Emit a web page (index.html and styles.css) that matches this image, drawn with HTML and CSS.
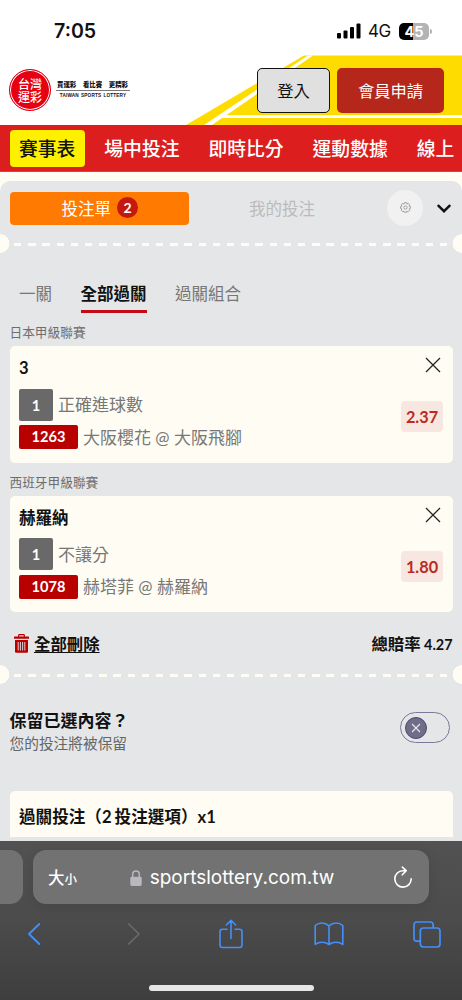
FILE: index.html
```html
<!DOCTYPE html>
<html lang="zh-Hant">
<head>
  <meta charset="UTF-8">
  <meta name="viewport" content="width=device-width, initial-scale=1">
  <title>台灣運彩</title>
  <link rel="stylesheet" href="styles.css">
</head>
<body>
  <div class="status-bar">
    <span class="time">7:05</span>
    <div class="status-right">
      <svg class="signal" width="24" height="16" viewBox="0 0 24 16">
        <rect x="0" y="10" width="4" height="5.5" rx="1"/>
        <rect x="6.5" y="7.5" width="4" height="8" rx="1"/>
        <rect x="13" y="4" width="4" height="11.5" rx="1"/>
        <rect x="19.5" y="0.5" width="4" height="15" rx="1"/>
      </svg>
      <span class="network">4G</span>
      <div class="battery">45</div>
    </div>
  </div>

  <header class="header">
    <svg class="header-bg" width="462" height="70" viewBox="0 0 462 70">
      <path d="M304 0.5H462V70H186z" fill="#ffdc00"/>
      <path d="M308 0.5h5L212 70h-8z" fill="#fff"/>
      <path d="M219 62l6-2h237v3H216z" fill="#fff"/>
    </svg>
    <div class="logo">
      <div class="logo-mark"><span>台灣</span><span>運彩</span></div>
      <div class="logo-text">
        <div class="slogan"><span>買運彩</span><span>看比賽</span><span>更精彩</span></div>
        <div class="logo-en">TAIWAN SPORTS LOTTERY</div>
      </div>
    </div>
    <div class="header-buttons">
      <button class="btn btn-login">登入</button>
      <button class="btn btn-join">會員申請</button>
    </div>
  </header>

  <nav class="nav">
    <a class="nav-item active">賽事表</a>
    <a class="nav-item">場中投注</a>
    <a class="nav-item">即時比分</a>
    <a class="nav-item">運動數據</a>
    <a class="nav-item">線上</a>
  </nav>

  <main class="main">
    <div class="panel">
      <div class="slip-tabs">
        <button class="slip-tab active">投注單 <span class="count">2</span></button>
        <button class="slip-tab">我的投注</button>
        <div class="gear">
          <svg width="11" height="11" viewBox="0 0 24 24" fill="none" stroke="#999" stroke-width="2">
            <circle cx="12" cy="12" r="3.6"/>
            <path d="M9.500 1.500h5l.8 3 3.200-1.200 2.700 3-1.400 2.700 3 1v4l-3 1.200 1.400 3-3 3-3-1.400-1 2.700h-4.400l-1-2.700-3 1.400-3-3 1.400-3-3-1.200v-4l3-1-1.400-2.700 2.700-3 3.200 1.200z"/>
          </svg>
        </div>
        <svg class="chevron" width="14" height="9" viewBox="0 0 14 9" fill="none" stroke="#111" stroke-width="2.4">
          <path d="M0.8 1L7 7.200L13.200 1"/>
        </svg>
      </div>

      <div class="divider"></div>

      <div class="mode-tabs">
        <a class="mode-tab">一關</a>
        <a class="mode-tab active">全部過關</a>
        <a class="mode-tab">過關組合</a>
      </div>

      <div class="league">日本甲級聯賽</div>
      <div class="card">
        <div class="card-info">
          <div class="pick">3</div>
          <div class="row"><span class="tag tag-gray">1</span>正確進球數</div>
          <div class="row"><span class="tag tag-red">1263</span>大阪櫻花 @ 大阪飛腳</div>
        </div>
        <div class="card-side">
          <svg width="16" height="16" viewBox="0 0 16 16" fill="none" stroke="#222" stroke-width="1.3"><path d="M1 1l14 14M15 1L1 15"/></svg>
          <span class="odds">2.37</span>
        </div>
      </div>

      <div class="league">西班牙甲級聯賽</div>
      <div class="card">
        <div class="card-info">
          <div class="pick">赫羅納</div>
          <div class="row"><span class="tag tag-gray">1</span>不讓分</div>
          <div class="row"><span class="tag tag-red">1078</span>赫塔菲 @ 赫羅納</div>
        </div>
        <div class="card-side">
          <svg width="16" height="16" viewBox="0 0 16 16" fill="none" stroke="#222" stroke-width="1.3"><path d="M1 1l14 14M15 1L1 15"/></svg>
          <span class="odds">1.80</span>
        </div>
      </div>

      <div class="summary">
        <a class="delete-all">
          <svg width="15" height="19" viewBox="0 0 15 19">
            <path d="M4.700 3V1.200Q4.700 .6 5.300 .6H9.700Q10.300 .6 10.300 1.200V3" fill="none" stroke="#b90000" stroke-width="1.2"/>
            <rect x="0" y="2.500" width="15" height="2.300" rx=".6" fill="#b90000"/>
            <path d="M1 6h13v11.500q0 1.200-1.200 1.200H2.200Q1 18.700 1 17.500z" fill="#b90000"/>
            <path d="M4.200 8v8.500M6.400 8v8.500M8.600 8v8.500M10.800 8v8.500" stroke="#e5e6e8" stroke-width=".9"/>
          </svg>
          <span>全部刪除</span>
        </a>
        <div class="total">總賠率 <span>4.27</span></div>
      </div>

      <div class="divider"></div>

      <div class="keep">
        <div>
          <div class="keep-title">保留已選內容？</div>
          <div class="keep-sub">您的投注將被保留</div>
        </div>
        <div class="switch">
          <div class="knob">
            <svg width="10" height="10" viewBox="0 0 10 10" fill="none" stroke="#e5e6e8" stroke-width="1.2"><path d="M1 1l8 8M9 1L1 9"/></svg>
          </div>
        </div>
      </div>

      <div class="parlay">過關投注（<span class="num">2</span>投注選項）x1</div>
    </div>
  </main>

  <footer class="browser">
    <div class="address-row">
      <div class="prev-page"></div>
      <div class="address">
        <span class="text-size">大<small>小</small></span>
        <div class="url">
          <svg width="12" height="16" viewBox="0 0 12 16">
            <path d="M2.700 8V4.300a3.300 3.300 0 0 1 6.600 0V8" fill="none" stroke="#b9b8be" stroke-width="1.5"/>
            <rect x="0.300" y="6.700" width="11.400" height="9.200" rx="1.400" fill="#b9b8be"/>
          </svg>
          <span>sportslottery.com.tw</span>
        </div>
        <svg class="reload" width="20" height="22" viewBox="0 0 20 22" fill="none" stroke="#fff" stroke-width="1.6" stroke-linecap="round" stroke-linejoin="round">
          <path d="M12.600 4.700H9.800A8.200 8.200 0 1 0 18.200 12.800M9.300 1.200L13.200 4.700L9.300 8.800"/>
        </svg>
      </div>
    </div>
    <div class="toolbar">
      <div class="tool"><svg width="14" height="22" viewBox="0 0 14 22" fill="none" stroke="#438ffb" stroke-width="1.8" stroke-linecap="round" stroke-linejoin="round"><path d="M12.300 1L2 11l10.300 10"/></svg></div>
      <div class="tool"><svg class="forward" width="14" height="22" viewBox="0 0 14 22" fill="none" stroke="#6b6b6b" stroke-width="1.6" stroke-linecap="round" stroke-linejoin="round"><path d="M1.700 1L12 11L1.700 21"/></svg></div>
      <div class="tool"><svg width="24" height="30" viewBox="0 0 24 30" fill="none" stroke="#438ffb" stroke-width="1.6" stroke-linecap="round" stroke-linejoin="round"><path d="M8 10.300H3.500Q1 10.300 1 12.800V26Q1 28.500 3.500 28.500H20.500Q23 28.500 23 26V12.800Q23 10.300 20.500 10.300H16M12 19.500V1.500M7.300 6L12 1.300L16.700 6"/></svg></div>
      <div class="tool"><svg width="30" height="24" viewBox="0 0 30 24" fill="none" stroke="#438ffb" stroke-width="1.6" stroke-linejoin="round"><path d="M15 3.800Q11.800 1 8 1Q4 1 1.200 3.500V22.500Q4 20.200 8 20.200Q12 20.200 15 22.500Q18 20.200 22 20.200Q26 20.200 28.800 22.500V3.500Q26 1 22 1Q18.200 1 15 3.800V22.500"/></svg></div>
      <div class="tool"><svg width="28" height="27" viewBox="0 0 28 27" fill="none" stroke="#438ffb" stroke-width="1.7"><rect x="7.300" y="7" width="19.700" height="19" rx="3"/><path d="M7.300 20.200H4Q1 20.200 1 17.200V4Q1 1 4 1H17.200Q20.200 1 20.200 4V7"/></svg></div>
    </div>
    <div class="home-bar"></div>
  </footer>
</body>
</html>
```
FILE: styles.css
```css
* {
  box-sizing: border-box;
}

body {
  margin: 0;
  height: 1000px;
  display: flex;
  flex-direction: column;
  overflow: hidden;
  background: #fffdf3;
  font-family: Lato, "Noto Sans CJK TC", sans-serif;
  color: #111;
}

button {
  font-family: inherit;
  border: none;
  padding: 0;
}

svg {
  display: block;
  flex-shrink: 0;
}

/* Status bar */
.status-bar {
  height: 55px;
  flex-shrink: 0;
  display: flex;
  justify-content: space-between;
  padding: 20px 33px 0 54px;
  background: #fff;
  font-family: Inter, sans-serif;
  line-height: 22px;
}

.time {
  font-size: 19.6px;
  font-weight: 600;
}

.status-right {
  display: flex;
  align-items: center;
  height: 22px;
}

.network {
  font-size: 17px;
  letter-spacing: -0.3px;
  margin: 0 8px 0 7px;
}

.battery {
  position: relative;
  width: 30px;
  height: 17px;
  border-radius: 5px;
  background: linear-gradient(to right, #000 46%, #b4b4b4 46%);
  color: #fff;
  font-size: 14.5px;
  font-weight: 700;
  line-height: 17px;
  text-align: center;
}

.battery::after {
  content: "";
  position: absolute;
  left: 31px;
  top: 6px;
  width: 2px;
  height: 5px;
  border-radius: 0 2px 2px 0;
  background: #b4b4b4;
}

/* Header */
.header {
  position: relative;
  height: 70px;
  flex-shrink: 0;
  display: flex;
  justify-content: space-between;
  padding: 13px 18px 0 9px;
  background: #fff;
}

.header-bg {
  position: absolute;
  left: 0;
  top: 0;
}

.logo {
  display: flex;
  height: 45px;
}

.logo-mark {
  width: 42px;
  height: 42px;
  margin-top: 1px;
  border-radius: 50%;
  border: 1.5px solid #e60012;
  box-shadow: inset 0 0 0 1px #fff;
  background: #e60012;
  color: #fff;
  display: flex;
  flex-direction: column;
  align-items: center;
  justify-content: center;
  font-family: "Noto Sans CJK TC", sans-serif;
  font-size: 12px;
  font-weight: 500;
}

.logo-mark span {
  height: 13px;
  line-height: 13px;
}

.logo-text {
  margin: 10px 0 0 5px;
  width: 74px;
}

.slogan {
  display: flex;
  justify-content: space-between;
  padding: 0 2px 0 1px;
  height: 13px;
  border-bottom: 1px solid #777;
  font-size: 6.4px;
  font-weight: 900;
  line-height: 13px;
}

.logo-en {
  font-family: "Liberation Sans", sans-serif;
  font-size: 4.7px;
  font-weight: 700;
  line-height: 10px;
  letter-spacing: 0.15px;
  word-spacing: 0.8px;
  text-align: center;
  white-space: nowrap;
}

.header-buttons {
  position: relative;
  display: flex;
  gap: 7px;
}

.btn {
  height: 45px;
  padding-bottom: 2px;
  border-radius: 5px;
  font-size: 16.3px;
}

.btn-login {
  width: 73px;
  background: #e0e0e0;
  border: 1px solid #111;
  color: #111;
}

.btn-join {
  width: 107px;
  background: #b5261b;
  color: #fff;
}

/* Nav */
.nav {
  height: 47px;
  flex-shrink: 0;
  display: flex;
  gap: 10px;
  padding: 5px 0 0 9.5px;
  background: #dc1e1e;
  border-bottom: 1px solid #e5402f;
  overflow: hidden;
}

.nav-item {
  flex-shrink: 0;
  height: 37px;
  padding: 0 9.5px;
  border-radius: 4px;
  color: #fff;
  font-size: 18.8px;
  font-weight: 500;
  line-height: 38px;
}

.nav-item.active {
  background: #fff000;
  color: #111;
}

/* Bet slip */
.main {
  height: 669px;
  flex-shrink: 0;
  padding-top: 9px;
  overflow: hidden;
}

.panel {
  height: 660px;
  padding: 10px 9.5px 0;
  background: #e5e6e8;
  border-radius: 10px 10px 0 0;
}

.slip-tabs {
  display: flex;
  align-items: center;
  height: 34px;
}

.slip-tab {
  display: flex;
  align-items: center;
  justify-content: center;
  flex-shrink: 0;
  width: 186px;
  height: 33px;
  padding-bottom: 1px;
  border-radius: 4px;
  background: none;
  color: #bbb;
  font-size: 16.5px;
}

.slip-tab.active {
  width: 179.5px;
  padding-left: 1px;
  background: #ff7a00;
  color: #fff;
}

.count {
  width: 21px;
  height: 21px;
  margin-left: 6px;
  border-radius: 50%;
  background: #c3190f;
  font-size: 14px;
  font-weight: 700;
  line-height: 21px;
}

.gear {
  width: 36px;
  height: 36px;
  margin: -1px 0 0 12px;
  border-radius: 50%;
  background: #f1f1f1;
  display: flex;
  align-items: center;
  justify-content: center;
  flex-shrink: 0;
}

.chevron {
  margin: 1px 0 0 14px;
}

/* dashed tear line with a punched hole at each end */
.divider {
  height: 19px;
  margin: 9px -9.5px 0;
  background:
    radial-gradient(circle at 0 50%, #fffdf3 9px, transparent 9.6px),
    radial-gradient(circle at 100% 50%, #fffdf3 9px, transparent 9.6px),
    repeating-linear-gradient(to right, #fffdf3 0 7.5px, transparent 7.5px 14.2px) 14px 9px / 434px 3px no-repeat;
}

.mode-tabs {
  display: flex;
  gap: 28.5px;
  height: 33px;
  margin: 27px 0 0 9.5px;
}

.mode-tab {
  height: 33px;
  color: #777;
  font-size: 16.5px;
  line-height: 28px;
}

.mode-tab.active {
  color: #111;
  font-weight: 700;
  border-bottom: 3.5px solid #c30d14;
}

.league {
  height: 33px;
  padding-top: 9px;
  color: #6e6e6e;
  font-size: 12.7px;
  line-height: 21px;
}

.card {
  display: flex;
  justify-content: space-between;
  height: 116.5px;
  padding: 9px 9.5px 0;
  border-radius: 5px;
  background: #fffdf3;
}

.pick {
  height: 33.5px;
  font-size: 16.5px;
  font-weight: 700;
  line-height: 27px;
}

.row {
  display: flex;
  align-items: center;
  height: 32px;
  margin-bottom: 0.5px;
  color: #777;
  font-size: 17px;
  line-height: 31px;
}

.tag {
  margin-right: 5px;
  border-radius: 2px;
  color: #fff;
  font-size: 14.6px;
  font-weight: 700;
  text-align: center;
}

.tag-gray {
  width: 34px;
  height: 32px;
  line-height: 33px;
  background: #696969;
}

.tag-red {
  width: 59px;
  height: 24px;
  line-height: 24px;
  background: #b90000;
}

.card-side {
  display: flex;
  flex-direction: column;
  align-items: flex-end;
  padding-top: 2px;
}

.card-side svg {
  margin-right: 2px;
}

.odds {
  width: 42px;
  height: 31px;
  margin-top: 28px;
  border-radius: 4px;
  background: #f7e7e0;
  color: #bd2b20;
  font-size: 16.3px;
  font-weight: 700;
  line-height: 31px;
  text-align: center;
}

.summary {
  display: flex;
  align-items: center;
  justify-content: space-between;
  height: 44px;
  padding: 18px 0 0 4.5px;
  font-size: 16.4px;
  font-weight: 700;
}

.delete-all {
  display: flex;
  align-items: center;
  gap: 5px;
  text-decoration: underline;
  text-underline-offset: 2px;
}

.total {
  word-spacing: -0.5px;
}

.total span {
  font-size: 14.4px;
}

.keep {
  display: flex;
  align-items: center;
  justify-content: space-between;
  height: 46px;
  margin-top: 24px;
  padding-right: 3px;
}

.keep-title {
  padding-top: 1px;
  font-size: 17px;
  font-weight: 700;
  line-height: 22px;
}

.keep-sub {
  color: #666;
  font-size: 14.7px;
  line-height: 22px;
}

.switch {
  width: 50px;
  height: 31px;
  margin-top: -8px;
  padding: 4px;
  border: 1px solid #7c7899;
  border-radius: 16px;
}

.knob {
  display: flex;
  align-items: center;
  justify-content: center;
  width: 22px;
  height: 22px;
  border: 1px solid #4b4870;
  border-radius: 50%;
  background: #6f6d89;
}

.parlay {
  height: 46px;
  margin-top: 37px;
  padding: 0 9.5px;
  border-radius: 5px 5px 0 0;
  background: #fffdf3;
  font-size: 16.6px;
  font-weight: 700;
  line-height: 52px;
}

.num {
  margin-right: 3px;
}

/* Browser chrome */
.browser {
  height: 159px;
  flex-shrink: 0;
  background: linear-gradient(#525252, #4b4b4b 50%, #3e3e3e);
}

.address-row {
  display: flex;
  gap: 10px;
  padding-top: 9px;
}

.prev-page {
  width: 23px;
  height: 54px;
  border-radius: 0 13px 13px 0;
  background: #727272;
}

.address {
  display: flex;
  align-items: center;
  justify-content: space-between;
  width: 396px;
  height: 54px;
  padding: 0 16px 0 15px;
  border-radius: 13px;
  background: #727272;
  box-shadow: 0 2px 12px rgba(0, 0, 0, 0.1);
  color: #fff;
}

.text-size {
  font-size: 16.5px;
  font-weight: 500;
}

.text-size small {
  font-size: 12.5px;
}

.url {
  display: flex;
  align-items: center;
  gap: 8px;
  margin-right: 6px;
  padding-top: 1px;
  font-family: Inter, sans-serif;
  font-size: 19px;
}

.toolbar {
  display: flex;
  align-items: center;
  justify-content: space-between;
  height: 30px;
  margin-top: 15px;
  padding: 0 15px 0 14px;
}

.tool {
  display: flex;
  justify-content: center;
  width: 40px;
}

.forward {
  margin-left: 4px;
}

.home-bar {
  width: 165px;
  height: 6px;
  margin: 36px auto 0;
  border-radius: 3px;
  background: #e6e6e6;
}
```
